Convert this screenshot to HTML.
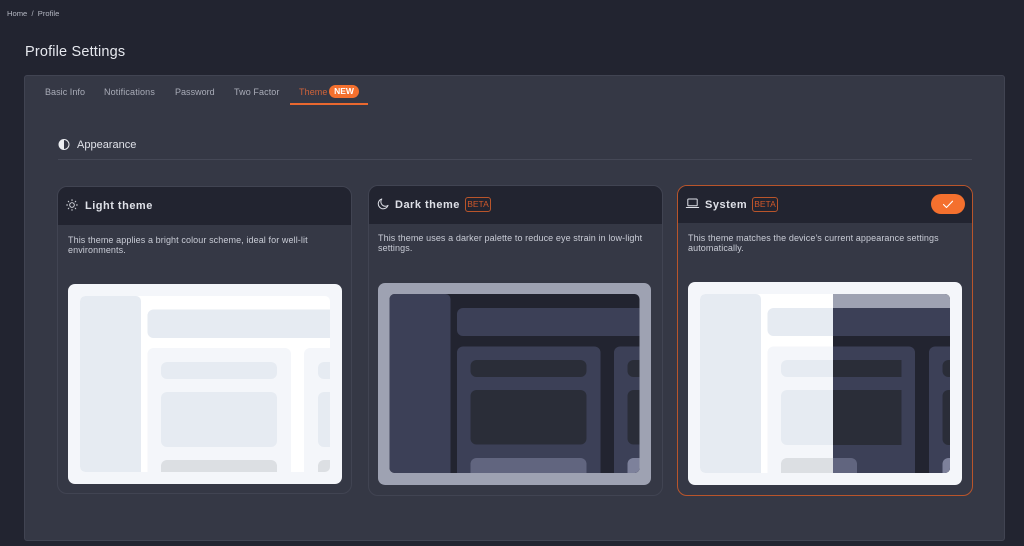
<!DOCTYPE html>
<html><head><meta charset="utf-8"><style>
html,body{margin:0;padding:0;width:1024px;height:546px;overflow:hidden;background:#222430;font-family:"Liberation Sans",sans-serif}
.a{position:absolute;white-space:nowrap;line-height:1}
.panel{position:absolute;left:24px;top:75px;width:979px;height:464px;background:#353845;border:1px solid #414452;border-radius:3px}
.card{position:absolute;box-sizing:border-box;background:#353845;border:1px solid #414452;border-radius:10px;overflow:hidden}
.hd{position:absolute;left:0;top:0;right:0;background:#222430}
.t{font-size:11px;font-weight:bold;color:#dfe1e8;letter-spacing:.5px}
.d{font-size:9px;color:#c9ccd6;letter-spacing:.1px;line-height:10px;white-space:normal}
.tab{font-size:9px;color:#a9acb8;top:87.5px;letter-spacing:.1px}
.badge{box-sizing:border-box;border:1px solid #b9552b;border-radius:3px;color:#d0582a;font-size:8.5px;width:26px;height:15px;line-height:13px;text-align:center;letter-spacing:0}
svg{position:absolute;display:block;overflow:visible}
</style></head><body>
<div class="a" style="left:7px;top:9.5px;font-size:7.6px;color:#b4b7c2">Home&nbsp; /&nbsp; Profile</div>
<div class="a" style="left:25px;top:44.5px;font-size:14.5px;color:#e6e8ee;letter-spacing:.17px">Profile Settings</div>
<div class="panel"></div>
<div class="a tab" style="left:45px;letter-spacing:.05px">Basic Info</div>
<div class="a tab" style="left:104px;letter-spacing:.15px">Notifications</div>
<div class="a tab" style="left:175px;letter-spacing:.02px">Password</div>
<div class="a tab" style="left:234px">Two Factor</div>
<div class="a tab" style="left:299px;color:#d0633a">Theme</div>
<div class="a" style="left:329px;top:85px;width:30px;height:13px;border-radius:7px;background:#f4702e;color:#fff;font-size:8.5px;font-weight:bold;line-height:13px;text-align:center">NEW</div>
<div class="a" style="left:290px;top:103px;width:78px;height:2px;background:#e9682f"></div>
<svg style="left:58px;top:139px" width="12" height="12" viewBox="0 0 12 12"><circle cx="6" cy="5.500" r="5" fill="none" stroke="#eceef2" stroke-width="1"/><path d="M6 .5A5 5 0 0 0 6 10.500Z" fill="#eceef2"/></svg>
<div class="a" style="left:77px;top:140px;font-size:11px;color:#dfe1e8;letter-spacing:0">Appearance</div>
<div class="a" style="left:58px;top:159px;width:914px;height:1px;background:#454856"></div>

<div class="card" style="left:57px;top:186px;width:295px;height:308px"><div class="hd" style="height:38px"></div></div>
<svg style="left:66px;top:199px" width="12" height="12" viewBox="0 0 12 12" fill="none" stroke="#dfe1e8" stroke-width=".9" stroke-linecap="round"><circle cx="6" cy="6" r="2.300"/><path d="M6 .6v1M6 10.400v1M.6 6h1M10.400 6h1M2.200 2.200l.7.7M9.100 9.100l.7.7M2.200 9.800l.7-.7M9.100 2.900l.7-.7"/></svg>
<div class="a t" style="left:85px;top:200.5px">Light theme</div>
<div class="a d" style="left:68px;top:235px;width:270px">This theme applies a bright colour scheme, ideal for well-lit environments.</div>
<svg style="left:68px;top:284px" width="274" height="200" viewBox="0 0 274 200">
<defs><clipPath id="c1"><rect x="12" y="12" width="250" height="176" rx="5"/></clipPath></defs>
<rect width="274" height="200" rx="7" fill="#f4f6fa"/>
<g clip-path="url(#c1)"><rect x="12" y="12" width="250" height="176" fill="#fff"/>
<rect x="12" y="12" width="61" height="176" rx="5" fill="#e6ebf2"/><rect x="60" y="30" width="13" height="158" fill="#e6ebf2"/>
<rect x="79.500" y="25.500" width="200" height="28.500" rx="6" fill="#e6ebf2"/>
<rect x="79.500" y="64" width="143.500" height="140" rx="6" fill="#f4f6fa"/>
<rect x="93" y="78" width="116" height="17" rx="6" fill="#e6ebf2"/><rect x="93" y="108" width="116" height="55" rx="6" fill="#e6ebf2"/><rect x="93" y="176" width="116" height="30" rx="6" fill="#dcdfe3"/>
<rect x="236" y="64" width="100" height="140" rx="6" fill="#f4f6fa"/>
<rect x="250" y="78" width="60" height="17" rx="6" fill="#e6ebf2"/><rect x="250" y="108" width="60" height="55" rx="6" fill="#e6ebf2"/><rect x="250" y="176" width="60" height="30" rx="6" fill="#dcdfe3"/></g>
</svg>

<div class="card" style="left:368px;top:185px;width:295px;height:311px"><div class="hd" style="height:38px"></div></div>
<svg style="left:377px;top:198px" width="12" height="12" viewBox="0 0 12 12" fill="none" stroke="#dfe1e8" stroke-width="1" stroke-linejoin="round"><path d="M4.800 1A5 5 0 1 0 11 7.400 4.500 4.500 0 0 1 4.800 1Z"/></svg>
<div class="a t" style="left:395px;top:199.500px">Dark theme</div>
<div class="a badge" style="left:465px;top:197px">BETA</div>
<div class="a d" style="left:378px;top:233px;width:275px">This theme uses a darker palette to reduce eye strain in low-light settings.</div>
<svg style="left:378px;top:283px" width="273" height="201" viewBox="0 0 273 201">
<defs><clipPath id="c2"><rect x="11.500" y="11" width="250" height="179" rx="5"/></clipPath></defs>
<rect width="273" height="202" rx="7" fill="#9ea2b2"/>
<g clip-path="url(#c2)"><rect x="11.500" y="11" width="250" height="179" fill="#222430"/>
<rect x="11.500" y="11" width="61" height="179" rx="5" fill="#3c4057"/><rect x="60" y="30" width="12.500" height="160" fill="#3c4057"/>
<rect x="79" y="25" width="200" height="28" rx="6" fill="#3c4057"/>
<rect x="79" y="63.500" width="143.500" height="140" rx="6" fill="#3c4057"/>
<rect x="92.500" y="77" width="116" height="17" rx="6" fill="#2a2d38"/><rect x="92.500" y="107" width="116" height="54.500" rx="6" fill="#2a2d38"/><rect x="92.500" y="175" width="116" height="30" rx="6" fill="#61657f"/>
<rect x="236" y="63.500" width="100" height="140" rx="6" fill="#3c4057"/>
<rect x="249.500" y="77" width="60" height="17" rx="6" fill="#2a2d38"/><rect x="249.500" y="107" width="60" height="54.500" rx="6" fill="#2a2d38"/><rect x="249.500" y="175" width="60" height="30" rx="6" fill="#7d819b"/></g>
</svg>

<div class="card" style="left:677px;top:185px;width:296px;height:311px;border-color:#b9552b"><div class="hd" style="height:37px"></div></div>
<svg style="left:686px;top:198px" width="13" height="11" viewBox="0 0 13 11" fill="none" stroke="#dfe1e8" stroke-width="1"><rect x="1.800" y="1" width="9.400" height="6.800" rx=".8"/><path d="M.3 9.500h12.400" stroke-linecap="round"/></svg>
<div class="a t" style="left:705px;top:199.500px">System</div>
<div class="a badge" style="left:752px;top:197px">BETA</div>
<div style="position:absolute;left:931px;top:194px;width:34px;height:20px;border-radius:10px;background:#f4702e"></div>
<svg style="left:942px;top:200px" width="12" height="9" viewBox="0 0 12 9" fill="none" stroke="#fff" stroke-width="1.100" stroke-linecap="round" stroke-linejoin="round"><path d="M1.500 4.500l3 3L10.500 1.200"/></svg>
<div class="a d" style="left:688px;top:233px;width:275px">This theme matches the device's current appearance settings automatically.</div>
<svg style="left:688px;top:282px" width="274" height="203" viewBox="0 0 274 203">
<defs><clipPath id="c3"><rect x="12" y="12" width="250" height="179" rx="5"/></clipPath><clipPath id="c4"><rect x="145" y="0" width="130" height="203"/></clipPath></defs>
<rect width="274" height="203" rx="7" fill="#f4f6fa"/>
<g clip-path="url(#c3)"><rect x="12" y="12" width="250" height="179" fill="#fff"/>
<rect x="12" y="12" width="61" height="179" rx="5" fill="#e6ebf2"/><rect x="60" y="30" width="13" height="161" fill="#e6ebf2"/>
<rect x="79.500" y="26" width="200" height="28" rx="6" fill="#e6ebf2"/>
<rect x="79.500" y="64.500" width="200" height="140" rx="6" fill="#f4f6fa"/>
<rect x="93" y="78" width="120" height="17" rx="6" fill="#e6ebf2"/><rect x="93" y="108" width="120" height="55" rx="6" fill="#e6ebf2"/><rect x="93" y="176" width="76" height="30" rx="6" fill="#dcdfe3"/>
<g clip-path="url(#c4)"><rect x="145" y="12" width="117" height="179" fill="#222430"/>
<rect x="145" y="12" width="117" height="14" fill="#9ea2b2"/>
<rect x="145" y="26" width="117" height="28" fill="#3c4057"/>
<rect x="100" y="64.500" width="127" height="140" rx="6" fill="#3c4057"/>
<rect x="100" y="78" width="113.500" height="17" fill="#2a2d38"/><rect x="100" y="108" width="113.500" height="55" fill="#2a2d38"/><rect x="93" y="176" width="76" height="30" rx="6" fill="#61657f"/>
<rect x="241" y="64.500" width="60" height="140" rx="6" fill="#3c4057"/>
<rect x="254.500" y="78" width="40" height="17" rx="6" fill="#2a2d38"/><rect x="254.500" y="108" width="40" height="55" rx="6" fill="#2a2d38"/><rect x="254.500" y="176" width="40" height="30" rx="6" fill="#7d819b"/></g></g>
</svg>
</body></html>
